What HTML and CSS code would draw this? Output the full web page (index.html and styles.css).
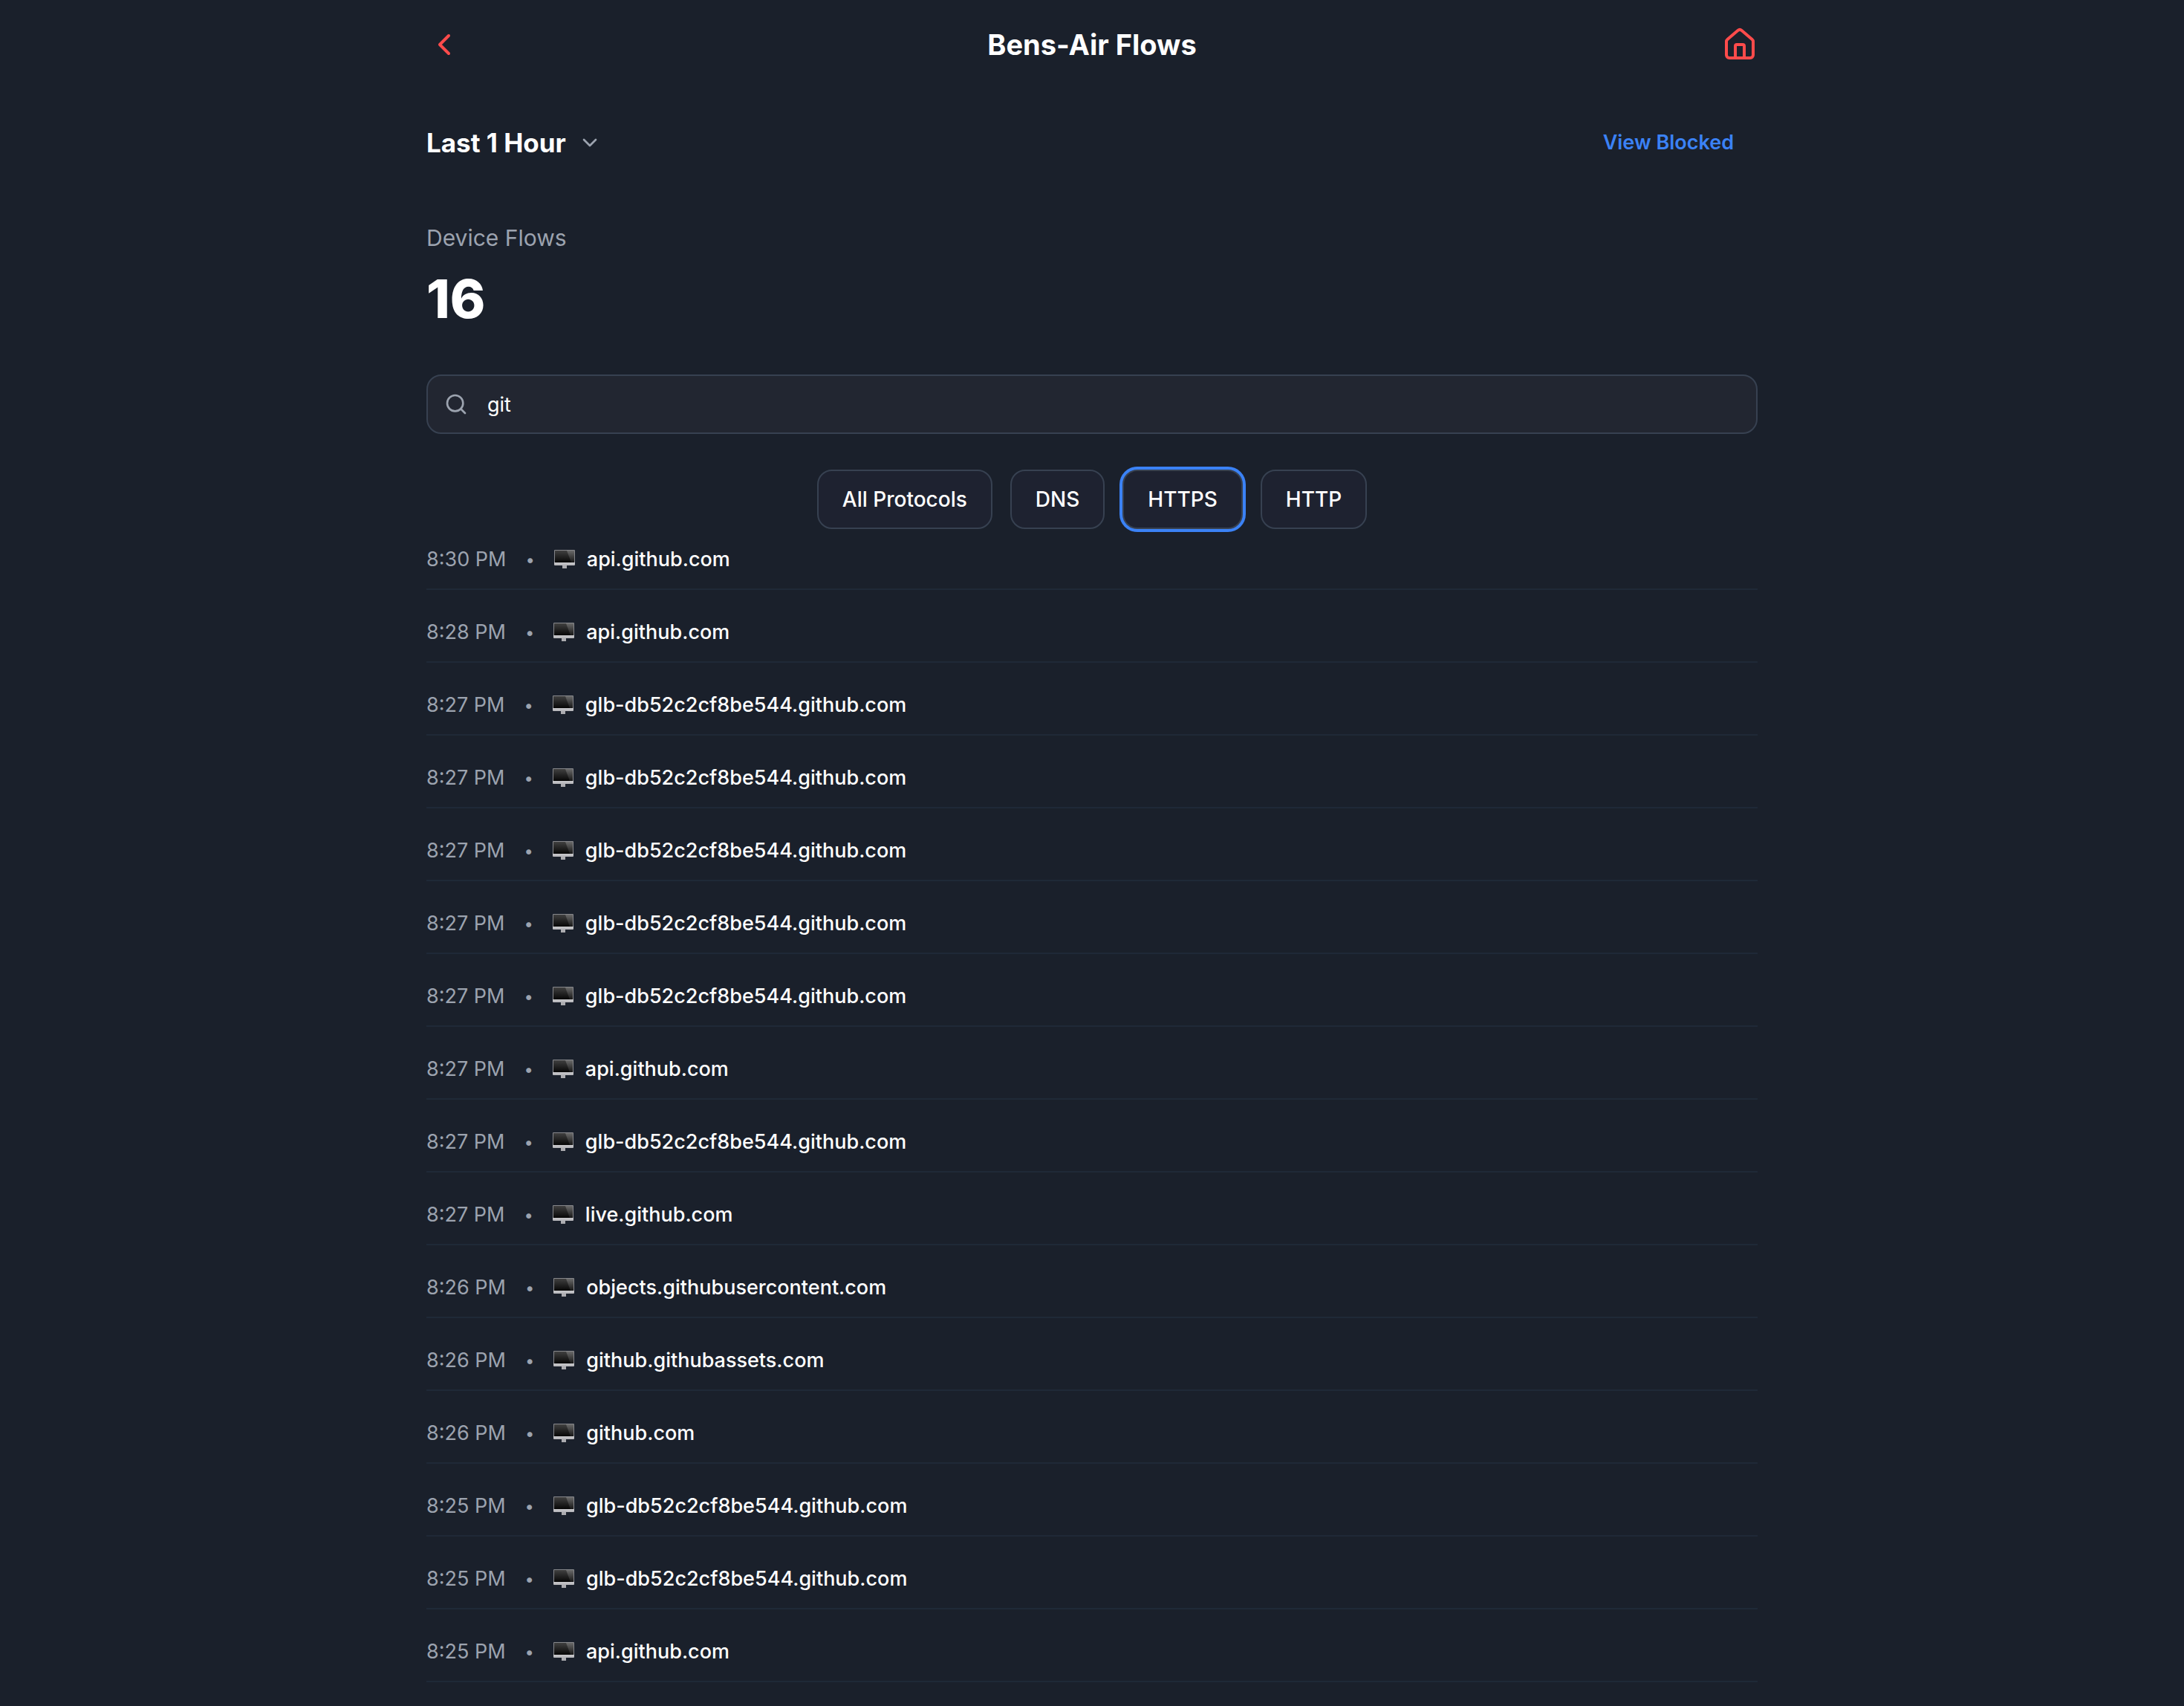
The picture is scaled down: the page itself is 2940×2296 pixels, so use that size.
FILE: index.html
```html
<!DOCTYPE html>
<html lang="en">
<head>
<meta charset="utf-8">
<meta name="viewport" content="width=device-width, initial-scale=1">
<title>Bens-Air Flows</title>
<link rel="stylesheet" href="styles.css">
</head>
<body>
<svg class="sprite" aria-hidden="true">
  <defs>
    <linearGradient id="screen" x1="0" y1="0" x2="0" y2="1"><stop offset="0" stop-color="#404040"/><stop offset="1" stop-color="#060606"/></linearGradient>
    <linearGradient id="glare" x1="0" y1="0" x2="0" y2="1"><stop offset="0" stop-color="#6a6a6a"/><stop offset="1" stop-color="#161616"/></linearGradient>
    <linearGradient id="chin" x1="0" y1="0" x2="0" y2="1"><stop offset="0" stop-color="#d4d4d7"/><stop offset="1" stop-color="#b4b4b8"/></linearGradient>
  </defs>
  <symbol id="monitor" viewBox="0 0 28 26">
    <path d="M11 20h6v5h-6z" fill="#acacb0"/>
    <rect x="0" y="15" width="28" height="6" rx="1" fill="url(#chin)"/>
    <rect x="0" y="0" width="28" height="17" rx="1" fill="#85868a"/>
    <rect x="1" y="1" width="26" height="16" fill="url(#screen)"/>
    <path d="M17 1h10v16h-4z" fill="url(#glare)"/>
  </symbol>
</svg>
<div class="page">
  <header class="topbar">
    <button class="icon-button" type="button" aria-label="Back">
      <svg class="icon" viewBox="0 0 24 24"><path d="m15 18-6-6 6-6"/></svg>
    </button>
    <h1 class="title">Bens-Air Flows</h1>
    <a class="icon-button" href="#" aria-label="Home">
      <svg class="icon" viewBox="0 0 24 24"><path d="M15 21v-8a1 1 0 0 0-1-1h-4a1 1 0 0 0-1 1v8"/><path d="M3 10a2 2 0 0 1 .709-1.528l7-5.999a2 2 0 0 1 2.582 0l7 5.999A2 2 0 0 1 21 10v9a2 2 0 0 1-2 2H5a2 2 0 0 1-2-2z"/></svg>
    </a>
  </header>
  <main>
    <div class="toolbar">
      <button class="range" type="button">Last 1 Hour
        <svg class="icon icon-small" viewBox="0 0 24 24"><path d="m6 9 6 6 6-6"/></svg>
      </button>
      <a class="blocked" href="#">View Blocked</a>
    </div>
    <section class="summary">
      <h2 class="summary-label">Device Flows</h2>
      <p class="summary-count">16</p>
    </section>
    <label class="search">
      <svg class="icon icon-small" viewBox="0 0 24 24"><circle cx="11" cy="11" r="8"/><path d="m21 21-4.300-4.300"/></svg>
      <input class="search-input" type="text" value="git" aria-label="Search flows">
    </label>
    <div class="filters">
      <button class="filter" type="button">All Protocols</button>
      <button class="filter" type="button">DNS</button>
      <button class="filter filter-active" type="button" aria-pressed="true">HTTPS</button>
      <button class="filter" type="button">HTTP</button>
    </div>
    <ul class="flows">
      <li class="flow"><time>8:30 PM</time><span class="dot">•</span><svg class="monitor"><use href="#monitor"/></svg><span class="host">api.github.com</span></li>
      <li class="flow"><time>8:28 PM</time><span class="dot">•</span><svg class="monitor"><use href="#monitor"/></svg><span class="host">api.github.com</span></li>
      <li class="flow"><time>8:27 PM</time><span class="dot">•</span><svg class="monitor"><use href="#monitor"/></svg><span class="host">glb-db52c2cf8be544.github.com</span></li>
      <li class="flow"><time>8:27 PM</time><span class="dot">•</span><svg class="monitor"><use href="#monitor"/></svg><span class="host">glb-db52c2cf8be544.github.com</span></li>
      <li class="flow"><time>8:27 PM</time><span class="dot">•</span><svg class="monitor"><use href="#monitor"/></svg><span class="host">glb-db52c2cf8be544.github.com</span></li>
      <li class="flow"><time>8:27 PM</time><span class="dot">•</span><svg class="monitor"><use href="#monitor"/></svg><span class="host">glb-db52c2cf8be544.github.com</span></li>
      <li class="flow"><time>8:27 PM</time><span class="dot">•</span><svg class="monitor"><use href="#monitor"/></svg><span class="host">glb-db52c2cf8be544.github.com</span></li>
      <li class="flow"><time>8:27 PM</time><span class="dot">•</span><svg class="monitor"><use href="#monitor"/></svg><span class="host">api.github.com</span></li>
      <li class="flow"><time>8:27 PM</time><span class="dot">•</span><svg class="monitor"><use href="#monitor"/></svg><span class="host">glb-db52c2cf8be544.github.com</span></li>
      <li class="flow"><time>8:27 PM</time><span class="dot">•</span><svg class="monitor"><use href="#monitor"/></svg><span class="host">live.github.com</span></li>
      <li class="flow"><time>8:26 PM</time><span class="dot">•</span><svg class="monitor"><use href="#monitor"/></svg><span class="host">objects.githubusercontent.com</span></li>
      <li class="flow"><time>8:26 PM</time><span class="dot">•</span><svg class="monitor"><use href="#monitor"/></svg><span class="host">github.githubassets.com</span></li>
      <li class="flow"><time>8:26 PM</time><span class="dot">•</span><svg class="monitor"><use href="#monitor"/></svg><span class="host">github.com</span></li>
      <li class="flow"><time>8:25 PM</time><span class="dot">•</span><svg class="monitor"><use href="#monitor"/></svg><span class="host">glb-db52c2cf8be544.github.com</span></li>
      <li class="flow"><time>8:25 PM</time><span class="dot">•</span><svg class="monitor"><use href="#monitor"/></svg><span class="host">glb-db52c2cf8be544.github.com</span></li>
      <li class="flow"><time>8:25 PM</time><span class="dot">•</span><svg class="monitor"><use href="#monitor"/></svg><span class="host">api.github.com</span></li>
    </ul>
  </main>
</div>
</body>
</html>
```
FILE: styles.css
```css
* {
  box-sizing: border-box;
  margin: 0;
  padding: 0;
}

body {
  background: #1a202b;
  color: #fff;
  font-family: Inter, "Liberation Sans", sans-serif;
  font-size: 27px;
  line-height: 40px;
}

button,
input {
  background: none;
  border: 0;
  color: inherit;
  font: inherit;
}

a {
  color: inherit;
  text-decoration: none;
}

.sprite {
  display: block;
  width: 0;
  height: 0;
}

.page {
  max-width: 1792px;
  margin: 0 auto;
}

.icon {
  display: block;
  flex: none;
  width: 48px;
  height: 48px;
  fill: none;
  stroke: currentColor;
  stroke-width: 2;
  stroke-linecap: round;
  stroke-linejoin: round;
}

.icon-small {
  width: 32px;
  height: 32px;
  color: #9ca3af;
}

.topbar {
  display: flex;
  align-items: center;
  justify-content: space-between;
  padding: 32px 0;
}

.icon-button {
  color: #ff4b4b;
}

.title {
  font-size: 38px;
  font-weight: 700;
  line-height: 56px;
}

.toolbar {
  display: flex;
  align-items: center;
  justify-content: space-between;
  padding: 44px 32px 44px 0;
}

.range {
  display: flex;
  align-items: center;
  gap: 16px;
  font-size: 35px;
  font-weight: 700;
  line-height: 56px;
}

.blocked {
  color: #3b82f6;
  font-weight: 600;
}

.summary {
  padding: 32px 0 62px;
}

.summary-label {
  color: #9ca3af;
  font-size: 30px;
  font-weight: 400;
  line-height: 48px;
}

.summary-count {
  margin-top: 18px;
  font-size: 72px;
  font-weight: 800;
  line-height: 80px;
}

.search {
  display: flex;
  align-items: center;
  gap: 26px;
  height: 80px;
  padding: 0 22px;
  background: #222631;
  border: 2px solid #374151;
  border-radius: 20px;
}

.search-input {
  flex: 1;
  min-width: 0;
  height: 100%;
  outline: none;
}

.filters {
  display: flex;
  justify-content: center;
  gap: 24px;
  padding: 48px 0 0;
}

.filter {
  height: 80px;
  padding: 0 32px;
  background: #1e2230;
  border: 2px solid #374151;
  border-radius: 20px;
  font-size: 28px;
  font-weight: 500;
}

.filter-active {
  box-shadow: 0 0 0 4px #3b82f6;
}

.flows {
  list-style: none;
}

.flow {
  display: flex;
  align-items: center;
  padding: 21px 0 19px;
  border-bottom: 2px solid #1f2937;
}

.flow + .flow {
  padding-top: 37px;
}

.flow time,
.dot {
  color: #9ca3af;
}

.dot {
  margin: 0 26px;
  font-size: 22px;
}

.monitor {
  width: 28px;
  height: 26px;
  margin-right: 16px;
}

.host {
  font-weight: 500;
}
```
